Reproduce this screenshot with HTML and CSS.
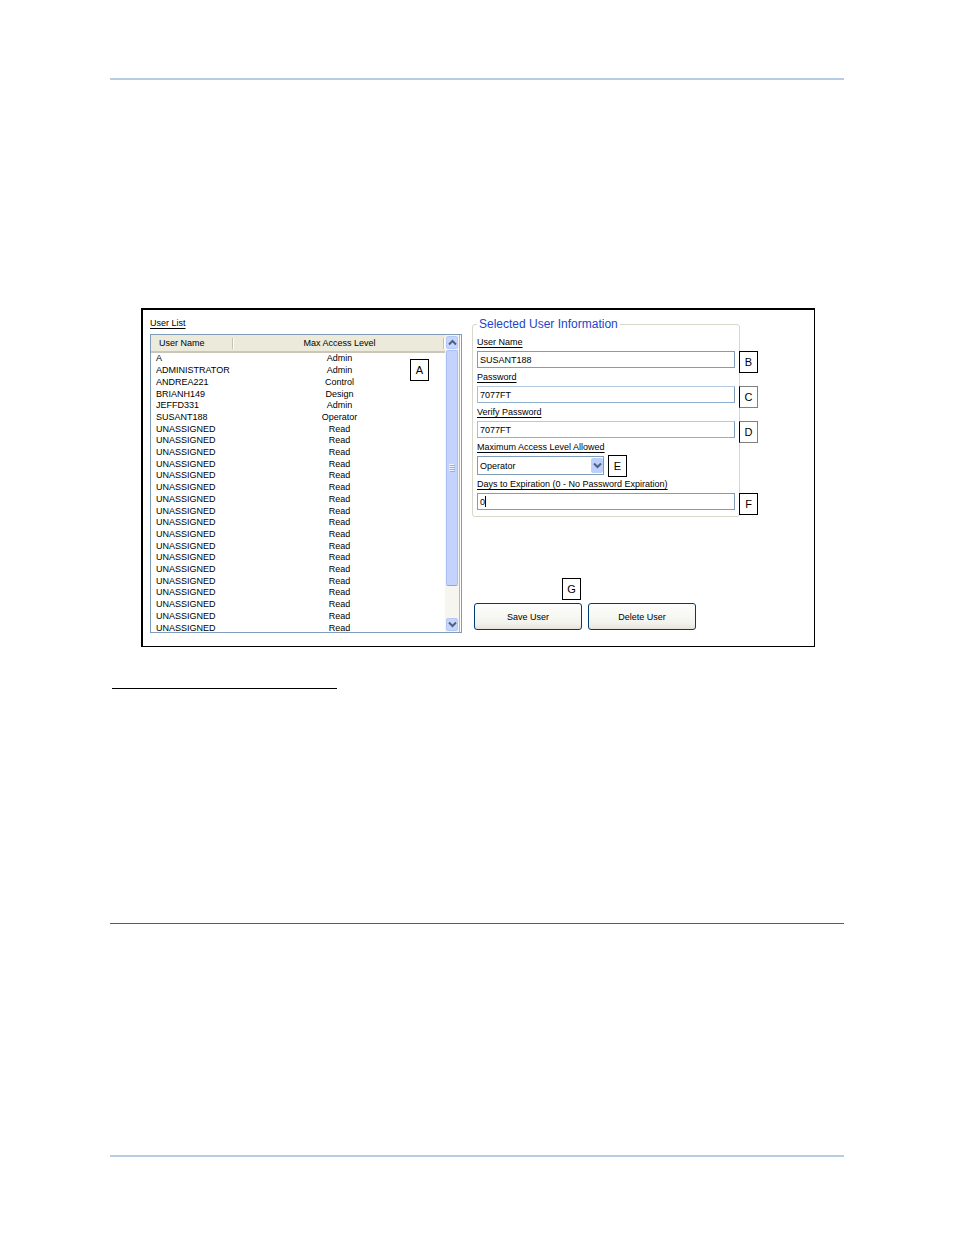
FILE: index.html
```html
<!DOCTYPE html>
<html lang="en">
<head>
<meta charset="utf-8">
<title>User Accounts</title>
<link rel="stylesheet" href="styles.css">
</head>
<body>
<main class="sheet">
  <hr class="rule rule-band">
  <section class="panel">
    <div class="list-side">
      <h2 class="caption" id="list-title">User List</h2>
      <div class="list-box">
        <div class="list-view">
          <table class="users" aria-labelledby="list-title">
            <thead><tr><th class="name-col">User Name</th><th>Max Access Level</th></tr></thead>
            <tbody>
              <tr><td>A</td><td>Admin</td></tr>
              <tr><td>ADMINISTRATOR</td><td>Admin</td></tr>
              <tr><td>ANDREA221</td><td>Control</td></tr>
              <tr><td>BRIANH149</td><td>Design</td></tr>
              <tr><td>JEFFD331</td><td>Admin</td></tr>
              <tr><td>SUSANT188</td><td>Operator</td></tr>
              <tr><td>UNASSIGNED</td><td>Read</td></tr>
              <tr><td>UNASSIGNED</td><td>Read</td></tr>
              <tr><td>UNASSIGNED</td><td>Read</td></tr>
              <tr><td>UNASSIGNED</td><td>Read</td></tr>
              <tr><td>UNASSIGNED</td><td>Read</td></tr>
              <tr><td>UNASSIGNED</td><td>Read</td></tr>
              <tr><td>UNASSIGNED</td><td>Read</td></tr>
              <tr><td>UNASSIGNED</td><td>Read</td></tr>
              <tr><td>UNASSIGNED</td><td>Read</td></tr>
              <tr><td>UNASSIGNED</td><td>Read</td></tr>
              <tr><td>UNASSIGNED</td><td>Read</td></tr>
              <tr><td>UNASSIGNED</td><td>Read</td></tr>
              <tr><td>UNASSIGNED</td><td>Read</td></tr>
              <tr><td>UNASSIGNED</td><td>Read</td></tr>
              <tr><td>UNASSIGNED</td><td>Read</td></tr>
              <tr><td>UNASSIGNED</td><td>Read</td></tr>
              <tr><td>UNASSIGNED</td><td>Read</td></tr>
              <tr><td>UNASSIGNED</td><td>Read</td></tr>
            </tbody>
          </table>
        </div>
        <div class="scrollbar">
          <button class="arrow" type="button" aria-label="Scroll up"><svg width="9" height="7" viewBox="0 0 9 7"><path d="M1 5.5 4.500 2 8 5.500" fill="none" stroke="#4d6185" stroke-width="2"/></svg></button>
          <div class="thumb"><svg width="6" height="8" viewBox="0 0 6 8"><path d="M0 .5h5M0 2.500h5M0 4.500h5M0 6.500h5" stroke="#eef4fe"/><path d="M1 1.500h5M1 3.500h5M1 5.500h5M1 7.500h5" stroke="#8cb0f8"/></svg></div>
          <button class="arrow" type="button" aria-label="Scroll down"><svg width="9" height="7" viewBox="0 0 9 7"><path d="M1 1.500 4.500 5 8 1.500" fill="none" stroke="#4d6185" stroke-width="2"/></svg></button>
        </div>
        <span class="tag tag-list">A</span>
      </div>
    </div>
    <form class="form-side">
      <fieldset class="info">
        <legend>Selected User Information</legend>
        <div class="field">
          <label for="user">User Name</label>
          <div class="control"><input id="user" type="text" value="SUSANT188"><span class="tag tag-side">B</span></div>
        </div>
        <div class="field">
          <label for="pass">Password</label>
          <div class="control soft"><input id="pass" type="text" value="7077FT"><span class="tag tag-side gray">C</span></div>
        </div>
        <div class="field">
          <label for="verify">Verify Password</label>
          <div class="control soft"><input id="verify" type="text" value="7077FT"><span class="tag tag-side gray">D</span></div>
        </div>
        <div class="field">
          <label for="level">Maximum Access Level Allowed</label>
          <div class="control drop">
            <select id="level"><option>Operator</option><option>Admin</option><option>Control</option><option>Design</option><option>Read</option></select>
            <span class="drop-arrow"><svg width="9" height="7" viewBox="0 0 9 7"><path d="M1 1.500 4.500 5 8 1.500" fill="none" stroke="#4d6185" stroke-width="2"/></svg></span>
            <span class="tag tag-side">E</span>
          </div>
        </div>
        <div class="field">
          <label for="days">Days to Expiration (0 - No Password Expiration)</label>
          <div class="control"><input id="days" type="text" value="0"><span class="caret"></span><span class="tag tag-side">F</span></div>
        </div>
      </fieldset>
      <div class="actions">
        <button class="push" type="button">Save User<span class="tag tag-top">G</span></button>
        <button class="push" type="button">Delete User</button>
      </div>
    </form>
  </section>
  <hr class="rule rule-short">
  <hr class="rule rule-thin">
  <hr class="rule rule-band">
</main>
</body>
</html>
```
FILE: styles.css
```css
* { box-sizing: border-box; }

body {
  margin: 0;
  background: #fff;
  color: #000;
  font-family: "Liberation Sans", Arial, sans-serif;
  font-size: 9px;
}

.sheet { padding: 78px 110px; }

.rule { margin: 0; border: 0; height: 1px; background: #000; }
.rule-band { height: 2px; background: #b8cce4; }
.rule-short { width: 225px; margin: 41px 0 0 2px; }
.rule-thin { margin: 234px 0 231px; background: #0f72b8; }

.panel {
  display: grid;
  grid-template-columns: 312fr 342fr;
  gap: 10px;
  margin: 228px 29px 0 31px;
  padding: 6px 0 13px 7px;
  border: 1px solid #000;
  border-width: 2px 1px 1px 2px;
}

.list-side { display: flex; flex-direction: column; }

.caption {
  width: max-content;
  margin: 0 0 4px;
  font-size: 9px;
  font-weight: normal;
  line-height: 14px;
}
.caption, .field label { text-decoration: underline; text-underline-offset: 2px; }

.list-box {
  position: relative;
  display: flex;
  height: 299px;
  border: 1px solid #7f9db9;
}
.list-view { flex: 1; min-width: 0; overflow: hidden; }

.users { width: 100%; height: 299px; border-collapse: collapse; table-layout: fixed; line-height: 11px; }
.users th {
  height: 17px;
  padding: 0;
  font-weight: normal;
  background: linear-gradient(90deg, #c5c2b2 1px, #fff 1px) right 0 top 3px / 2px 11px no-repeat, #ebeadb;
  border-bottom: 2px solid #cbc7b8;
}
.users td { padding: 0; text-align: center; white-space: nowrap; }
.users .name-col { width: 83px; padding-left: 8px; text-align: left; }
.users td:first-child { padding-left: 5px; text-align: left; }

.scrollbar {
  display: flex;
  flex-direction: column;
  width: 15px;
  margin-right: 1px;
  padding: 1px;
  border-right: 1px solid #a5b9e0;
  background: #f6f5f0;
}
.arrow {
  display: grid;
  place-items: center;
  width: 12px;
  height: 13px;
  padding: 0;
  border: 1px solid #b4c8f6;
  border-radius: 2px;
  background: #c6d5fd;
}
.thumb {
  display: grid;
  place-items: center;
  width: 12px;
  height: 236px;
  margin: 1px 0 auto;
  border: 1px solid #a9bff5;
  border-bottom-color: #8ba8e0;
  border-radius: 2px;
  background: #c3d3fd;
}

.tag {
  display: grid;
  place-items: center;
  width: 19px;
  height: 22px;
  border: 1px solid #000;
  background: #fff;
  font-size: 11px;
  line-height: 14px;
}
.tag.gray { border-color: #808080 #808080 #808080 #000; }
.tag-list { position: absolute; right: 32px; top: 24px; }
.tag-side { position: absolute; left: 100%; top: 0; margin-left: 4px; }
.tag-top { position: absolute; right: 0; bottom: 100%; margin-bottom: 4px; }

.form-side { display: flex; flex-direction: column; justify-content: space-between; padding-bottom: 3px; }

.info {
  width: 268px;
  min-width: 0;
  margin: 0;
  padding: 3px 4px 6px;
  border: 1px solid #d8d7c8;
  border-radius: 3px;
}
.info legend {
  padding: 0 2px;
  color: #1b45c8;
  font-size: 12px;
  line-height: 16px;
}

.field + .field { margin-top: 2px; }
.field label { display: block; width: max-content; line-height: 14px; margin-bottom: 2px; }

.control { position: relative; height: 17px; }
.control input, .control select {
  display: block;
  width: 100%;
  height: 100%;
  margin: 0;
  padding: 0 2px;
  border: 1px solid #7f9db9;
  border-radius: 0;
  background: #fff;
  color: #000;
  font: inherit;
  appearance: none;
}
.soft input { border-color: #b5cbe0 #7f9db9 #8eafcf #a5bfd8; }
.drop { width: 127px; height: 19px; }
.drop .tag-side { top: -1px; }
.drop-arrow {
  position: absolute;
  right: 1px;
  top: 2px;
  display: grid;
  place-items: center;
  width: 12px;
  height: 15px;
  border-radius: 2px;
  background: #bdd0fb;
  pointer-events: none;
}
.caret { position: absolute; left: 8px; top: 3px; width: 1px; height: 11px; background: #000; }

.actions { display: flex; gap: 6px; margin-left: 2px; }
.push {
  position: relative;
  width: 108px;
  height: 27px;
  padding: 0;
  border: 1px solid #003c74;
  border-radius: 3px;
  background: linear-gradient(#fdfdfb, #f3f3ee 75%, #e6e3da);
  color: #000;
  font: inherit;
}
```
